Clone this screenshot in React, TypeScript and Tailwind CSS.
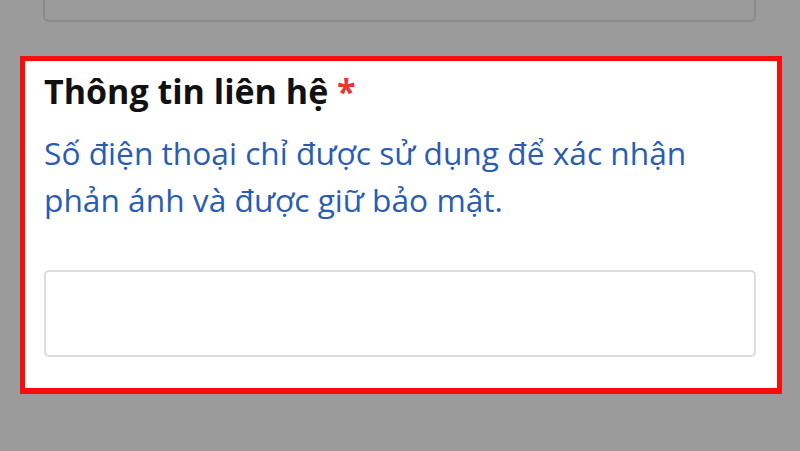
export default function App() {
  return (
    <div className="w-[800px] h-[451px] bg-[#9b9b9b] overflow-hidden" style={{ fontFamily: '"Open Sans", "Noto Sans", sans-serif' }}>
      <div className="ml-[43px] w-[713px] h-[22px] border-2 border-t-0 border-[#8a8a8a] rounded-b-[6px]" />
      <div className="mt-[34px] ml-[20px] w-[762px] h-[338px] border-[5px] border-b-[6px] border-[#f70d0d] bg-white pl-[19px] pt-[7px]">
        <div className="text-[34px] leading-[46px] font-bold text-[#111111]">
          Thông tin liên hệ <span className="text-[#e53a2e]">*</span>
        </div>
        <div className="mt-[15px] text-[31.7px] leading-[47px] text-[#2a5db0] w-[712px]">
          Số điện thoại chỉ được sử dụng để xác nhận phản ánh và được giữ bảo mật.
        </div>
        <div className="mt-[47px] w-[712px] h-[87px] border-2 border-[#dddddd] rounded-[5px]" />
      </div>
    </div>
  );
}
